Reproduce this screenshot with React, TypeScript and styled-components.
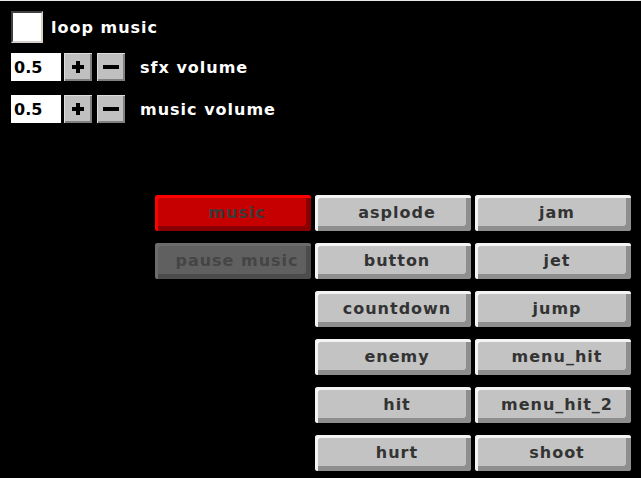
import styled, { createGlobalStyle, css } from 'styled-components';

const GlobalStyle = createGlobalStyle`
  html, body {
    margin: 0;
    padding: 0;
    background: #000;
  }
`;

type Variant = 'normal' | 'active' | 'disabled';

const columns: { label: string; variant?: Variant }[][] = [
  [{ label: 'music', variant: 'active' }, { label: 'pause music', variant: 'disabled' }],
  ['asplode', 'button', 'countdown', 'enemy', 'hit', 'hurt'].map((label) => ({ label })),
  ['jam', 'jet', 'jump', 'menu_hit', 'menu_hit_2', 'shoot'].map((label) => ({ label })),
];

const volumes = [
  { label: 'sfx volume', value: '0.5' },
  { label: 'music volume', value: '0.5' },
];

const App = () => {
  return (
    <Page>
      <GlobalStyle />
      <CheckRow>
        <CheckBox />
        <Label>loop music</Label>
      </CheckRow>
      {volumes.map((v) => (
        <VolumeRow key={v.label}>
          <NumberInput>{v.value}</NumberInput>
          <StepButton>
            <svg width="12" height="12" viewBox="0 0 12 12">
              <rect x="4" y="0" width="4" height="12" fill="#000" />
              <rect x="0" y="4" width="12" height="4" fill="#000" />
            </svg>
          </StepButton>
          <StepButton>
            <svg width="16" height="4" viewBox="0 0 16 4">
              <rect x="0" y="0" width="16" height="4" fill="#000" />
            </svg>
          </StepButton>
          <VolumeLabel>{v.label}</VolumeLabel>
        </VolumeRow>
      ))}
      <ButtonGrid>
        {columns.map((col, i) => (
          <ButtonColumn key={i}>
            {col.map((b) => (
              <SoundButton key={b.label} $variant={b.variant ?? 'normal'}>
                {b.label}
              </SoundButton>
            ))}
          </ButtonColumn>
        ))}
      </ButtonGrid>
    </Page>
  );
};

const pixelFont = `"DejaVu Sans", "Liberation Sans", sans-serif`;

const Page = styled.div`
  min-height: 100vh;
  box-sizing: border-box;
  border-top: 1px solid #e8e8e8;
  background: #000;
  padding: 10px 10px 0 11px;
  font-family: ${pixelFont};
  font-weight: bold;
  font-size: 16px;
  letter-spacing: 1px;
`;

const CheckRow = styled.div`
  display: flex;
  align-items: center;
  gap: 8px;
  height: 32px;
`;

const CheckBox = styled.div`
  width: 32px;
  height: 32px;
  box-sizing: border-box;
  background: #fff;
  border-style: solid;
  border-width: 2px;
  border-color: #404040 #d4d0c8 #d4d0c8 #404040;
`;

const Label = styled.span`
  color: #fff;
`;

const VolumeRow = styled.div`
  display: flex;
  align-items: center;
  height: 28px;
  margin-top: 10px;

  & + & {
    margin-top: 14px;
  }
`;

const NumberInput = styled.div`
  width: 50px;
  height: 28px;
  box-sizing: border-box;
  background: #fff;
  color: #000;
  padding-left: 3px;
  display: flex;
  align-items: center;
  letter-spacing: 0;
`;

const StepButton = styled.div`
  width: 28px;
  height: 28px;
  box-sizing: border-box;
  margin-left: 3px;
  background: #c0c0c0;
  box-shadow: inset 1px 1px 0 #dcdcdc, inset -2px -2px 0 #808080;
  display: flex;
  align-items: center;
  justify-content: center;

  & + & {
    margin-left: 5px;
  }
`;

const VolumeLabel = styled(Label)`
  margin-left: 15px;
`;

const ButtonGrid = styled.div`
  display: flex;
  justify-content: flex-end;
  gap: 4px;
  margin-top: 72px;
  padding-right: 0;
`;

const ButtonColumn = styled.div`
  display: flex;
  flex-direction: column;
  gap: 12px;
  width: 156px;
`;

const variants = {
  normal: css`
    background: #c3c3c3;
    color: #333;
    box-shadow: inset 3px 3px 0 #f4f4f4, inset -5px -5px 0 #8e8e8e;
  `,
  active: css`
    background: #c60000;
    color: #3a3a3a;
    box-shadow: inset 3px 3px 0 #ff0000, inset -5px -5px 0 #8a0000;
  `,
  disabled: css`
    background: #606060;
    color: #454545;
    box-shadow: inset 3px 3px 0 #6c6c6c, inset -5px -5px 0 #4c4c4c;
  `,
};

const SoundButton = styled.div<{ $variant: Variant }>`
  height: 36px;
  box-sizing: border-box;
  border-radius: 3px;
  padding: 0 0 2px 8px;
  display: flex;
  align-items: center;
  justify-content: center;
  ${({ $variant }) => variants[$variant]}
`;

export default App;
